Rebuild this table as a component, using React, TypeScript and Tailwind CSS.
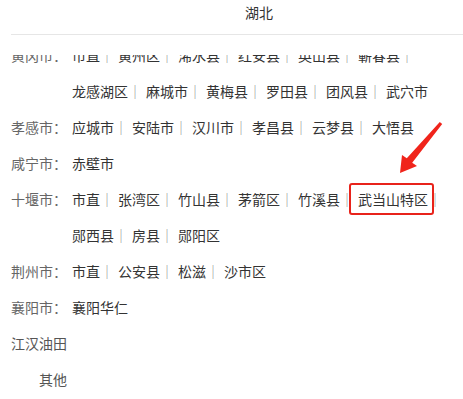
import React from 'react';

interface Region {
  city: string;
  towns: string[];
}

const regions: Region[] = [
  { city: '黄冈市：', towns: ['市直', '黄州区', '浠水县', '红安县', '英山县', '蕲春县', '龙感湖区', '麻城市', '黄梅县', '罗田县', '团风县', '武穴市'] },
  { city: '孝感市：', towns: ['应城市', '安陆市', '汉川市', '孝昌县', '云梦县', '大悟县'] },
  { city: '咸宁市：', towns: ['赤壁市'] },
  { city: '十堰市：', towns: ['市直', '张湾区', '竹山县', '茅箭区', '竹溪县', '武当山特区', '郧西县', '房县', '郧阳区'] },
  { city: '荆州市：', towns: ['市直', '公安县', '松滋', '沙市区'] },
  { city: '襄阳市：', towns: ['襄阳华仁'] },
];

const RegionRow: React.FC<{ region: Region }> = ({ region }) => (
  <div className="flex">
    <div className="w-[61px] shrink-0 text-[#666]">{region.city}</div>
    <div className="flex flex-1 flex-wrap">
      {region.towns.map((town, i) => (
        <span key={town} className="whitespace-nowrap text-[#333]">
          {town}
          {i < region.towns.length - 1 && <span className="mr-[4px] text-[#999]">｜</span>}
        </span>
      ))}
    </div>
  </div>
);

const App: React.FC = () => {
  return (
    <div
      className="relative flex h-[399px] w-[463px] flex-col overflow-hidden bg-white text-[14px]"
      style={{ fontFamily: '"Noto Sans CJK SC", "Noto Sans", sans-serif' }}
    >
      <div className="ml-[11px] flex h-[35px] shrink-0 justify-center border-b border-[#e6e6e6] pl-[44px] pt-[1px] leading-[22px] text-[#333]">
        湖北
      </div>

      {/* scrolled list: first row sits partly under the header */}
      <div className="mt-[20px] flex-1 overflow-hidden">
        <div className="-mt-[18px] pl-[11px] leading-[36px]">
          {regions.map((r) => (
            <RegionRow key={r.city} region={r} />
          ))}
          <div className="w-[56px] text-[#555]">江汉油田</div>
          <div className="w-[56px] text-right text-[#555]">其他</div>
        </div>
      </div>

      {/* highlight box */}
      <div className="absolute left-[349px] top-[183px] h-[32px] w-[85px] rounded-[3px] border-2 border-[#e8231b]" />

      {/* pointer arrow */}
      <svg className="absolute left-[390px] top-[115px]" width="60" height="65" viewBox="0 0 60 65">
        <polygon
          points="49.8,7 52.2,9 22.2,47.7 27,51 10,58 12,40 16.8,43.3"
          fill="#f0241b"
        />
      </svg>
    </div>
  );
};

export default App;
